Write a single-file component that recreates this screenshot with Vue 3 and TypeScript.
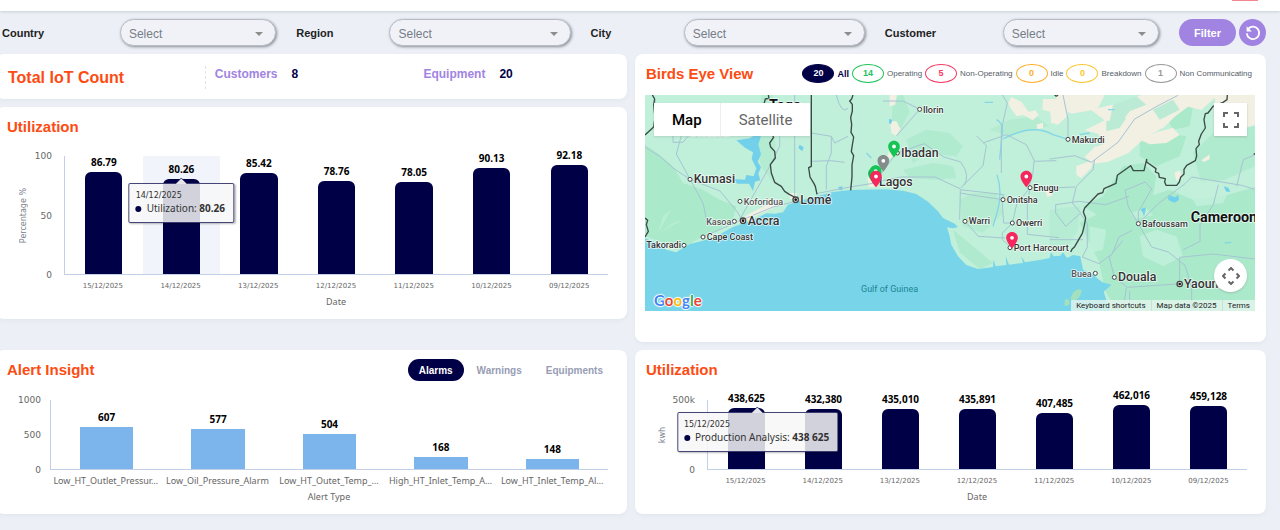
<script setup lang="ts">
import { ref } from 'vue'

interface Point {
  label: string
  value: number
  text: string
  hover?: boolean
}

interface Chart {
  key: string
  title: string
  max: number
  ticks: string[]
  yTitle: string
  xTitle: string
  points: Point[]
  series: string
  tipText: string
}

const days = ['15/12/2025', '14/12/2025', '13/12/2025', '12/12/2025', '11/12/2025', '10/12/2025', '09/12/2025']
const utilization = [86.79, 80.26, 85.42, 78.76, 78.05, 90.13, 92.18]
const production = [438625, 432380, 435010, 435891, 407485, 462016, 459128]

const charts: Chart[] = [
  {
    key: 'util',
    title: 'Utilization',
    max: 100,
    ticks: ['100', '50', '0'],
    yTitle: 'Percentage %',
    xTitle: 'Date',
    points: utilization.map((v, i) => ({ label: days[i], value: v, text: v.toFixed(2), hover: i === 1 })),
    series: 'Utilization:',
    tipText: '80.26',
  },
  {
    key: 'alerts',
    title: 'Alert Insight',
    max: 1000,
    ticks: ['1000', '500', '0'],
    yTitle: '',
    xTitle: 'Alert Type',
    points: [
      { label: 'Low_HT_Outlet_Pressur…', value: 607, text: '607' },
      { label: 'Low_Oil_Pressure_Alarm', value: 577, text: '577' },
      { label: 'Low_HT_Outet_Temp_…', value: 504, text: '504' },
      { label: 'High_HT_Inlet_Temp_A…', value: 168, text: '168' },
      { label: 'Low_HT_Inlet_Temp_Al…', value: 148, text: '148' },
    ],
    series: '',
    tipText: '',
  },
  {
    key: 'energy',
    title: 'Utilization',
    max: 500000,
    ticks: ['500k', '0'],
    yTitle: 'kwh',
    xTitle: 'Date',
    points: production.map((v, i) => ({ label: days[i], value: v, text: v.toLocaleString('en-US'), hover: i === 0 })),
    series: 'Production Analysis:',
    tipText: '438 625',
  },
]

const filters = [
  { id: 'country', label: 'Country', wide: true },
  { id: 'region', label: 'Region', wide: false },
  { id: 'city', label: 'City', wide: false },
  { id: 'customer', label: 'Customer', wide: true },
]

const statuses = [
  { name: 'All', count: 20, cls: 'all' },
  { name: 'Operating', count: 14, cls: 'green' },
  { name: 'Non-Operating', count: 5, cls: 'red' },
  { name: 'Idle', count: 0, cls: 'amber' },
  { name: 'Breakdown', count: 0, cls: 'yellow' },
  { name: 'Non Communicating', count: 1, cls: 'grey' },
]

const tabs = ['Alarms', 'Warnings', 'Equipments']
const activeTab = ref('Alarms')

interface Town {
  name: string
  x: number
  y: number
  size: 'l' | 's'
  dot: [number, number]
  end?: boolean
  capital?: boolean
  dim?: boolean
}

const towns: Town[] = [
  { name: 'Kumasi', x: 162, y: 281, size: 'l', dot: [151, 269] },
  { name: 'Koforidua', x: 312, y: 345, size: 's', dot: [301, 335], dim: true },
  { name: 'Lomé', x: 482, y: 342, size: 'l', dot: [468, 330], capital: true },
  { name: 'Accra', x: 324, y: 406, size: 'l', dot: [310, 393], capital: true },
  { name: 'Kasoa', x: 275, y: 405, size: 's', dot: [284, 395], end: true, dim: true },
  { name: 'Cape Coast', x: 201, y: 452, size: 's', dot: [190, 442] },
  { name: 'Takoradi', x: 124, y: 476, size: 's', dot: [133, 467], end: true },
  { name: 'Ilorin', x: 850, y: 69, size: 's', dot: [840, 59] },
  { name: 'Ibadan', x: 784, y: 202, size: 'l', dot: [773, 190] },
  { name: 'Lagos', x: 718, y: 288, size: 'l', dot: [706, 277] },
  { name: 'Enugu', x: 1181, y: 304, size: 's', dot: [1171, 294] },
  { name: 'Onitsha', x: 1101, y: 339, size: 's', dot: [1090, 330] },
  { name: 'Owerri', x: 1129, y: 409, size: 's', dot: [1118, 400] },
  { name: 'Warri', x: 987, y: 404, size: 's', dot: [976, 395] },
  { name: 'Port Harcourt', x: 1122, y: 483, size: 's', dot: [1111, 474] },
  { name: 'Makurdi', x: 1296, y: 159, size: 's', dot: [1285, 149] },
  { name: 'Bafoussam', x: 1507, y: 412, size: 's', dot: [1496, 402] },
  { name: 'Buea', x: 1356, y: 561, size: 's', dot: [1367, 551], end: true, dim: true },
  { name: 'Douala', x: 1435, y: 575, size: 'l', dot: [1424, 563] },
  { name: 'Yaoundé', x: 1633, y: 596, size: 'l', dot: [1620, 583], capital: true },
]

const pins = [
  { x: 763, y: 203, color: '#14c454' },
  { x: 731, y: 246, color: '#858b8b' },
  { x: 703, y: 284, color: '#14b04e' },
  { x: 708, y: 277, color: '#14c454' },
  { x: 709, y: 293, color: '#f5275c' },
  { x: 1160, y: 293, color: '#f5275c' },
  { x: 1117, y: 477, color: '#f5275c' },
]
</script>

<template>
  <div class="page">
    <header class="topbar"><span class="alert-mark"></span></header>

    <form class="filters" @submit.prevent>
      <div v-for="f in filters" :key="f.id" class="field" :class="{ wide: f.wide }">
        <label :for="f.id">{{ f.label }}</label>
        <div class="select-wrap">
          <select :id="f.id">
            <option>Select</option>
          </select>
          <svg class="caret" viewBox="0 0 8 4" aria-hidden="true"><path d="M0 0h8L4 4z" /></svg>
        </div>
      </div>
      <div class="actions">
        <button type="submit" class="btn-filter">Filter</button>
        <button type="reset" class="btn-reset" aria-label="Reset filters">
          <svg viewBox="0 0 16 16" aria-hidden="true">
            <path d="M3.4 3.7A6.2 6.2 0 1 1 1.8 8.4" fill="none" stroke="#fff" stroke-width="1.8" />
            <path d="M1.6 1.3v5.2h5.2z" fill="#fff" />
          </svg>
        </button>
      </div>
    </form>

    <main class="board">
      <section class="card summary">
        <h2>Total IoT Count</h2>
        <dl>
          <div><dt>Customers</dt><dd>8</dd></div>
          <div><dt>Equipment</dt><dd>20</dd></div>
        </dl>
      </section>

      <section class="card map-card">
        <div class="map-head">
          <h2>Birds Eye View</h2>
          <ul class="legend">
            <li v-for="s in statuses" :key="s.name" :class="s.cls">
              <span class="pill">{{ s.count }}</span><span class="name">{{ s.name }}</span>
            </li>
          </ul>
        </div>
        <div class="map">
          <svg class="terrain" viewBox="16 16 1830 648" preserveAspectRatio="xMidYMid slice">
            <rect x="0" y="0" width="1900" height="700" fill="#c0efda" />
            <g fill="#abe9cb">
              <path d="M16 165L60 195 100 230 130 280 190 300 240 330 290 350 280 385 230 425 180 445 120 480 60 455 16 440z" />
              <path d="M365 16h35l-12 80 20 70-15 60 5 50-30-40-20-60 10-70z" opacity=".6" />
              <path d="M800 150l60-30 70 10 40 40-20 30-90-10-40 30z M790 240l90-20 60 10 10 35-60 5-80-5z M760 20l30-4 20 50-25 50-30 0z" opacity=".7" />
              <path d="M960 330l40-20 70 0 20 60-60 60-60-20z M1050 120l60-30 80-10 40 30-60 10-60 20z" opacity=".55" />
              <path d="M940 420l60 50 60 50-40 18-60-50z" opacity=".8" />
              <path d="M1330 350l60-30 60-90 60-10 40 40-10 60-70 50-90 10z" />
              <path d="M1500 150l80-20 60 10-20 60-70 30-50-30z M1570 60l60-40 30 30-10 60-50 10z" />
              <path d="M1320 400l60-30 90-20 60-30 60-20 70 30 90-10 102-30v374h-420l-35-60-20-90z" />
              <path d="M1660 190l60-60 125-20v120l-90 40-70 10z" opacity=".7" />
              <path d="M1230 360l90-10-5 70-35 60-50-10z" opacity=".5" />
            </g>
            <g fill="#c3f0db">
              <path d="M1500 440l50-20 60 20 20 60-60 30-60-30z M1640 280l70-10 60 30-20 40-80 10z M1350 410l50 10-10 60-40 10z M1470 370l50-15 20 22-50 10z" opacity=".8" />
              <path d="M70 380l25-20-40 70z M100 400l30-10-70 40z" opacity=".6" />
            </g>
            <g fill="#f2efe3">
              <path d="M750 16h22l-6 30-16 4z M750 95l20 0 12 22-12 22-14-8z" />
              <path d="M1115 22l30 14 22 30 20-4 10 14-18 16-28-16-20 4-18-24-8-16z M1210 28l50 0 30 24-10 30-26 24-22-10 16-26-40-10z M1190 105l20-6 0 16-16 4z M1230 56l24 0 4 36-22 10z" />
              <path d="M1245 16h150l-20 40 60-15 70-25h230l-50 45-40-10-40 30-30 30-60 35-50 45-60 25-40 6-30-20 30-30 30-10-20-30-40-10 60-30-40-30-60 10-30-20z" />
              <path d="M1500 150l50-22 50-14 20 22-40 24-50 4z M1310 230l50-20-5 25-30 30-15-10z M1685 212l25-18 0 15-18 8z M1604 250l16-8 8 20-18 12z" />
              <path d="M1725 110l50-14 40 18 31-8V16h-120z" />
              <path d="M283 400l50-30 50-25 30-3-10 12-50 22-45 25z M447 310h25v18h-20z M683 262l30 12 0 18-25 0z M1215 300l20 0 2 18-14 4z M748 185l14 8-8 14-12 -6z" />
            </g>
            <g fill="#bcebd5">
              <path d="M1420 45l70-25 30 25-50 20-30 40-30-10z M1540 60l60-30 20 30-60 30z M1400 95l60-10-20 30-40 10z" />
            </g>
            <path class="sea" d="M16 446L50 460 80 480 110 488 150 463 190 453 230 440 280 412 330 395 380 371 405 372 430 368 445 345 470 337 530 320 580 307 630 301 740 299 790 303 830 313 865 336 895 365 910 385 945 402 955 412 940 416 922 413 930 440 935 465 955 500 980 526 1015 538 1060 532 1062 510 1068 530 1100 526 1098 500 1108 525 1150 520 1145 500 1156 518 1200 511 1230 505 1234 488 1242 500 1262 498 1270 488 1282 505 1300 496 1322 500 1330 540 1360 555 1388 578 1416 585 1392 606 1400 630 1412 664H16z" />
            <g class="water">
              <path d="M290 152l40-6 16-10 18 4-8 24 8 30-10 22 10 16-8 20 6 20-16 4-6 28-12-22-36 0-10-14 34 2 4-14 22 4 8-24-14-28 4-20-24-14z" />
              <path d="M480 165l12 8-4 12-12-10z M596 292l12-2 0 12-10-2z M748 88l10 2-4 14-6-4z M1586 315l20 8 10-8 2 16-14 8-18-8z M1503 360l8-6 8 0-6 26-4-12z M1752 290l14 4 6 12-12 0z" />
            </g>
            <path d="M1300 610q12-14 26-10-2 20-16 30-14 6-18-4z M1276 630q12-6 14 10-6 14-16 6z" fill="#a3e0bb" />
            <g class="river">
              <path d="M1070 90Q1095 100 1086 145L1080 210 M1090 148Q1180 100 1240 135L1285 149 M1072 255Q1090 310 1072 370L1060 410 M1035 38h25 M1755 460l20-2 M1320 135l30-5 M1405 60l20 0 M680 190l15 15" />
            </g>
            <g class="roads">
              <path d="M16 172Q60 195 100 235L151 269 190 340 203 400 M125 138l-15 55 41 76 M100 138v20h30l15-18 M151 269l90 35 50 60 19 30 M300 390l90-160 30-60 0-30 M190 442l90-40 120-50 80-20" />
              <path d="M40 16Q60 60 50 110 M465 16v310 M515 130l60 10 10 20 40-20 M575 140v50l-15 40 0 70 M515 215l60-2 40 5 M590 16q15 60 35 40 M530 312l100-20 76-12" />
              <path d="M840 59l-70 80 M840 59l-50-25-60 0 M763 200l-55 75 M773 190l80-28 60 40 50 15q30 40 10 70 M706 277l80-15 100 0 75 35 M1010 138l30 30-10 60-68 68 M1030 160l70-25 60 30 25 50 65-2 M1085 250v-130l18-80-15-24 M962 300l-2 90 M962 300l130 15-5 15 5 70 25 0 M962 310l60 10 70 10 M1171 294l-40 50-13 56-30 30 0 20 30 26 M1171 294l-8 50 0 90 95 10 M976 395l40 45 80 5 M1171 294l60 0 M1183 215q0 40-15 75" />
              <path d="M1285 149v-60l-15-73 M1230 208l75-10 50 20 80-60 50-70 70-40 60-31 M1365 210l-5 30-50 50-12 50 25 30-45 40-30-40 0-25 70-10 80 10 70-25 M1230 295l75-3 M1323 372l20 30 0 70-15 30 50 20 40-30 20-50 40-20 M1496 402l-30-50-10-50 60-25 20 20-40 70 0 35 40 70 50 15 50 40 20 66 0 90 M1496 402l60-60 80-60 20-20 60 10 90 15 39 12 M1736 285l-15 60-40 60 0 50-50 25 M1620 583l0-80 100-10 126 15 M1424 563l40 30 150-10 M1424 563l-15-60 40-50 M1846 195l-35 15-20 80 M1450 664l10-70 M1230 450h100 M1470 664l0-60" />
            </g>
            <g class="borders">
              <path d="M38 16l7 12-3 16 4 40-4 28-26 24 M16 385l8 7-4 13 6 20-10 17" />
              <path d="M386 16l2 10-11 2-4 15 18 30-5 40 16 30-12 17 3 12 12 13 2 20-15 20 3 25 10 28 20 12 10 15 14 9 20 11" />
              <path d="M515 16v214l-8 4 4 28 12 20 4 8 5 24" />
              <path d="M640 16l-4 12-6 6 8 10 0 20-5 20 3 20-2 24 8 14-4 24-3 20 7 12-5 28 0 36-4 40" />
              <path d="M1763 16l-1 14-12 8-30 12-15 20-8 2-4 18 4 25-12 18-8 22 2 10-10 12 2 22-4 14-26 14-8 12 0 14-10 10-4 14-8 10h-32l-4-10 2-10-18-4-2-12-10-4 2-10-28-20 0-8-8 34h-32l-8-15-40 29-4 24-36 16-4 12-14 4-40 42-4 12 7 18-4 22-6 24-23 40-8 8-4 8" />
              <path d="M1245 16q6 6 10 0 M1842 193h4" />
            </g>
            <g class="labels">
              <text class="country" x="388" y="62">Togo</text>
              <text class="country" x="145" y="138">Ghana</text>
              <text class="country" x="1653" y="397">Cameroon</text>
              <text class="gulf" x="664" y="607">Gulf of Guinea</text>
              <g v-for="t in towns" :key="t.name">
                <circle :cx="t.dot[0]" :cy="t.dot[1]" :r="t.capital ? 8 : 6" fill="#fff" stroke="#444" :stroke-width="t.capital ? 4 : 3" />
                <circle v-if="t.capital" :cx="t.dot[0]" :cy="t.dot[1]" r="4" fill="#111" />
                <text :class="[t.size, { dim: t.dim }]" :x="t.x" :y="t.y" :text-anchor="t.end ? 'end' : 'start'">{{ t.name }}</text>
              </g>
            </g>
            <g v-for="(p, i) in pins" :key="i" :transform="`translate(${p.x - 30} ${p.y - 55}) scale(2.5)`">
              <circle cx="12" cy="9" r="3.5" fill="#fff" />
              <path :fill="p.color" fill-rule="evenodd" d="M12 2C8.13 2 5 5.13 5 9c0 5.25 7 13 7 13s7-7.75 7-13c0-3.87-3.13-7-7-7zm0 9.3a2.3 2.3 0 1 1 0-4.6 2.3 2.3 0 0 1 0 4.6z" />
            </g>
          </svg>
          <div class="map-type">
            <button type="button" class="on">Map</button>
            <button type="button">Satellite</button>
          </div>
          <button type="button" class="map-full" aria-label="Toggle fullscreen">
            <svg viewBox="0 0 16 16"><path d="M1 5V1h4M11 1h4v4M15 11v4h-4M5 15H1v-4" fill="none" stroke="#666" stroke-width="2" /></svg>
          </button>
          <button type="button" class="map-pan" aria-label="Map camera controls">
            <svg viewBox="0 0 18 18"><path d="M6.5 3.5L9 1l2.5 2.5M6.5 14.5L9 17l2.5-2.5M3.5 6.5L1 9l2.5 2.5M14.5 6.5L17 9l-2.5 2.5" fill="none" stroke="#666" stroke-width="2" /></svg>
          </button>
          <a class="google" href="#" aria-label="Google"><span class="b">G</span><span class="r">o</span><span class="y">o</span><span class="b">g</span><span class="g">l</span><span class="r">e</span></a>
          <div class="map-foot">
            <button type="button">Keyboard shortcuts</button>
            <span>Map data ©2025</span>
            <a href="#">Terms</a>
          </div>
        </div>
      </section>

      <section v-for="c in charts" :key="c.key" class="card chart-card" :class="c.key">
        <div class="chart-head">
          <h2>{{ c.title }}</h2>
          <div v-if="c.key === 'alerts'" class="tabs" role="tablist">
            <button v-for="t in tabs" :key="t" type="button" role="tab" :aria-selected="t === activeTab" :class="{ on: t === activeTab }" @click="activeTab = t">{{ t }}</button>
          </div>
        </div>
        <div class="chart">
          <div class="axis">
            <span class="y-title">{{ c.yTitle }}</span>
            <div class="ticks"><span v-for="t in c.ticks" :key="t">{{ t }}</span></div>
          </div>
          <div class="plot">
            <div v-for="p in c.points" :key="p.label" class="cell" :class="{ hover: p.hover }">
              <span class="value">{{ p.text }}</span>
              <div class="bar" :style="{ height: (p.value / c.max) * 100 + '%' }">
                <div v-if="p.hover" class="tip">
                  <svg class="nub" viewBox="0 0 12 6"><path d="M0 6L6 0l6 6" /></svg>
                  <div class="tip-date">{{ p.label }}</div>
                  <div class="tip-row"><i class="dot"></i>{{ c.series }} <b>{{ c.tipText }}</b></div>
                </div>
              </div>
            </div>
          </div>
          <div class="x-labels"><span v-for="p in c.points" :key="p.label">{{ p.label }}</span></div>
          <div class="x-title">{{ c.xTitle }}</div>
        </div>
      </section>
    </main>
  </div>
</template>

<style>
body {
  margin: 0;
  background: #ecf0f6;
}
</style>

<style scoped>
.page {
  font-family: "Liberation Sans", Arial, sans-serif;
  min-height: 100vh;
  overflow: hidden;
  background: #ecf0f6;
  color: #222;
}
button {
  font-family: inherit;
  border: 0;
  padding: 0;
  background: none;
  cursor: pointer;
}
.topbar {
  position: relative;
  height: 11px;
  background: #fff;
  box-shadow: 0 1px 3px #c9cdd8;
}
.alert-mark {
  position: absolute;
  top: 0;
  right: 22px;
  width: 26px;
  height: 1px;
  background: #f0888e;
}
.filters {
  display: flex;
  align-items: center;
  gap: 20px;
  height: 43px;
  padding: 0 14px 0 2px;
}
.field {
  flex: 1;
  display: flex;
  align-items: center;
}
.field label {
  flex: 0 0 34%;
  font-size: 11px;
  font-weight: bold;
  line-height: 16px;
}
.field.wide label {
  flex-basis: 43%;
}
.select-wrap {
  position: relative;
  flex: 1;
}
select {
  display: block;
  appearance: none;
  width: 100%;
  height: 27px;
  padding: 2px 24px 0 8px;
  border: 1px solid #b9bcc3;
  border-radius: 14px;
  background: #f0f2f8;
  box-shadow: 1px 1px 3px #888c94;
  color: #767d86;
  font: 12px "Liberation Sans", Arial, sans-serif;
}
.caret {
  position: absolute;
  right: 13px;
  top: 13px;
  width: 8px;
  height: 4px;
  fill: #8d8d8d;
  pointer-events: none;
}
.actions {
  display: flex;
  gap: 3px;
}
.btn-filter {
  width: 57px;
  height: 27px;
  border-radius: 14px;
  background: #a184e2;
  color: #fff;
  font-size: 11px;
  font-weight: bold;
}
.btn-reset {
  display: grid;
  place-items: center;
  width: 27px;
  height: 27px;
  border-radius: 50%;
  background: #a184e2;
}
.btn-reset svg {
  width: 16px;
  height: 16px;
}
.board {
  display: grid;
  grid-template-columns: minmax(0, 1fr) minmax(0, 1fr);
  grid-template-rows: auto 1fr auto;
  grid-template-areas: "summary map" "util map" "alerts energy";
  gap: 8px;
  margin: 0 14px 0 -4px;
}
.card {
  border-radius: 8px;
  background: #fff;
  box-shadow: 0 2px 4px #e2e6ee;
}
h2 {
  margin: 0;
  color: #fd4b12;
  font-size: 15px;
  line-height: 18px;
  white-space: nowrap;
}
.summary {
  grid-area: summary;
  display: flex;
  align-items: center;
  box-sizing: border-box;
  height: 45px;
  padding: 2px 4px 0 12px;
}
.summary h2 {
  flex: 0 0 32%;
  font-size: 16px;
}
.summary dl {
  flex: 1;
  display: flex;
  margin: 0;
  height: 23px;
  border-left: 1px dashed #dce6e9;
}
.summary dl div {
  flex: 1;
  display: flex;
  gap: 14px;
  padding-left: 9px;
  font-size: 12px;
  line-height: 16px;
  font-weight: bold;
}
dt {
  color: #a184e2;
}
dd {
  margin: 0;
  color: #000046;
}
.map-card {
  grid-area: map;
  padding: 10px 11px 31px 10px;
}
.map-head {
  display: flex;
  align-items: center;
  justify-content: space-between;
  height: 19px;
  padding: 0 3px 0 1px;
}
.legend {
  display: flex;
  gap: 3px;
  margin: 0;
  padding: 0;
  list-style: none;
  font-size: 8px;
}
.legend li {
  display: flex;
  align-items: center;
  gap: 3px;
  white-space: nowrap;
}
.pill {
  box-sizing: border-box;
  width: 32px;
  height: 19px;
  border: 1px solid;
  border-radius: 50%;
  font-size: 9px;
  font-weight: bold;
  line-height: 17px;
  text-align: center;
}
.name {
  color: #555d68;
}
.all .pill {
  background: #000046;
  border-color: #000046;
  color: #fff;
}
.all .name {
  color: #000046;
  font-size: 9px;
  font-weight: bold;
}
.green .pill {
  color: #21c45d;
}
.red .pill {
  color: #f43b62;
}
.amber .pill {
  color: #fbb02d;
}
.yellow .pill {
  color: #fcc62e;
}
.grey .pill {
  color: #999;
}
.map {
  position: relative;
  height: 216px;
  margin-top: 12px;
  overflow: hidden;
  font-family: Roboto, sans-serif;
}
.terrain {
  display: block;
  width: 100%;
  height: 100%;
}
.sea {
  fill: #78d5e9;
}
.water {
  fill: #72d0ea;
}
.river,
.roads,
.borders {
  fill: none;
  stroke-linejoin: round;
}
.river {
  stroke: #84d6e6;
  stroke-width: 4;
}
.roads {
  stroke: #a6c4d2;
  stroke-width: 3;
}
.borders {
  stroke: #3a4a45;
  stroke-width: 4;
}
.labels text {
  fill: #333;
  stroke: #fff;
  stroke-opacity: 0.75;
  stroke-width: 5px;
  paint-order: stroke;
  stroke-linejoin: round;
  font-weight: 500;
}
.labels .l {
  font-size: 37px;
}
.labels .s {
  font-size: 27px;
}
.labels .dim {
  fill: #555;
}
.labels .country {
  font-size: 43px;
  font-weight: 700;
  fill: #111;
}
.labels .gulf {
  font-size: 27px;
  font-weight: 400;
  fill: #1c8494;
  stroke: none;
}
.map-type {
  position: absolute;
  left: 9px;
  top: 8px;
  display: flex;
  height: 33px;
  background: #fff;
  box-shadow: 0 1px 2px #8884;
}
.map-type button {
  padding: 0 18px;
  color: #666;
  font-size: 15px;
}
.map-type .on {
  border-right: 1px solid #eee;
  color: #000;
  font-weight: 500;
}
.map-full,
.map-pan {
  position: absolute;
  right: 8px;
  display: grid;
  place-items: center;
  width: 33px;
  height: 33px;
  background: #fff;
  box-shadow: 0 1px 2px #8886;
}
.map-full {
  top: 8px;
}
.map-pan {
  bottom: 19px;
  border-radius: 50%;
}
.map-full svg {
  width: 16px;
  height: 16px;
}
.map-pan svg {
  width: 18px;
  height: 18px;
}
.google {
  position: absolute;
  left: 9px;
  bottom: 1px;
  font-family: Lato, sans-serif;
  font-size: 15px;
  font-weight: 700;
  line-height: 20px;
  text-decoration: none;
  text-shadow: 0 0 1px #fff, 1px 0 1px #fff, -1px 0 1px #fff, 0 1px 1px #fff, 0 -1px 1px #fff;
}
.b { color: #4285f4; }
.r { color: #ea4335; }
.y { color: #fbbc05; }
.g { color: #34a853; }
.map-foot {
  position: absolute;
  right: 0;
  bottom: 0;
  display: flex;
  font-size: 8px;
  line-height: 11px;
  background: #e3f5ecd0;
}
.map-foot > * {
  padding: 0 5px;
  color: #222;
  font-size: inherit;
  line-height: inherit;
  text-decoration: none;
}
.map-foot > * + * {
  border-left: 1px solid #c5e2d5;
}
.chart-card {
  padding: 11px 19px 11px 11px;
}
.util {
  grid-area: util;
  align-self: start;
}
.alerts {
  grid-area: alerts;
}
.energy {
  grid-area: energy;
}
.chart-head {
  display: flex;
  align-items: center;
  justify-content: space-between;
  height: 18px;
}
.tabs {
  display: flex;
  gap: 2px;
  margin-right: -6px;
}
.tabs button {
  height: 22px;
  padding: 0 11px;
  border-radius: 11px;
  color: #989db5;
  font-size: 10px;
  font-weight: bold;
}
.tabs .on {
  background: #000046;
  color: #fff;
}
.chart {
  display: grid;
  grid-template-columns: 57px minmax(0, 1fr);
  margin-top: 21px;
  color: #666;
  font-family: "Noto Sans", "Open Sans", sans-serif;
  font-size: 9px;
  line-height: 12px;
}
.axis {
  display: flex;
  align-items: center;
  justify-content: space-between;
  padding: 0 12px 0 11px;
}
.y-title {
  writing-mode: vertical-rl;
  transform: rotate(180deg);
  font-family: "DejaVu Sans", sans-serif;
  font-size: 8px;
  color: #7a7f8c;
}
.ticks {
  align-self: stretch;
  display: flex;
  flex-direction: column;
  justify-content: space-between;
  margin: -6px 0;
  text-align: right;
  font-family: "DejaVu Sans", sans-serif;
  font-size: 9px;
}
.plot {
  display: flex;
  height: 118px;
  border-left: 1px solid #c3cfe8;
  border-bottom: 1px solid #c3cfe8;
}
.cell {
  flex: 1;
  min-width: 0;
  display: flex;
  flex-direction: column;
  align-items: center;
  justify-content: flex-end;
}
.cell.hover {
  background: #f1f4fa;
}
.energy .cell.hover {
  background: none;
}
.value {
  flex: none;
  margin-bottom: 4px;
  color: #000;
  font-size: 10px;
  font-weight: bold;
}
.bar {
  position: relative;
  flex: none;
  width: 48%;
  border-radius: 6px 6px 0 0;
  background: #000046;
}
.alerts .bar {
  border-radius: 0;
  background: #7cb5ec;
}
.util .chart {
  margin-top: 20px;
}
.alerts .chart {
  grid-template-columns: 43px minmax(0, 1fr);
}
.alerts .plot,
.energy .plot {
  height: 69px;
}
.energy .chart {
  grid-template-columns: 61px minmax(0, 1fr);
}
.tip {
  position: absolute;
  z-index: 2;
  top: 4px;
  left: 50%;
  transform: translateX(-50%);
  box-sizing: border-box;
  height: 40px;
  padding: 6px 8px 0 6px;
  border: 1px solid #000046b8;
  border-radius: 2px;
  background: #f7f7f7d9;
  box-shadow: 1px 1px 2px #0004;
  color: #333;
  font-size: 10px;
  line-height: 12px;
  white-space: nowrap;
}
.energy .tip {
  left: 80%;
}
.nub {
  position: absolute;
  top: -6px;
  left: calc(50% - 6px);
  width: 12px;
  height: 6px;
  fill: #e5e5ea;
  stroke: #000046b8;
}
.tip-date {
  font-family: "DejaVu Sans", sans-serif;
  font-size: 8px;
}
.dot {
  display: inline-block;
  width: 6px;
  height: 6px;
  margin-right: 5px;
  border-radius: 50%;
  background: #000046;
}
.x-labels {
  grid-column: 2;
  display: flex;
  margin-top: 5px;
  font-family: "DejaVu Sans", sans-serif;
  font-size: 7px;
}
.x-labels span {
  flex: 1;
  width: 0;
  display: flex;
  justify-content: center;
  white-space: nowrap;
}
.alerts .x-labels {
  font-family: "Noto Sans", "Open Sans", sans-serif;
  font-size: 9px;
}
.x-title {
  grid-column: 2;
  margin-top: 4px;
  text-align: center;
}
</style>
